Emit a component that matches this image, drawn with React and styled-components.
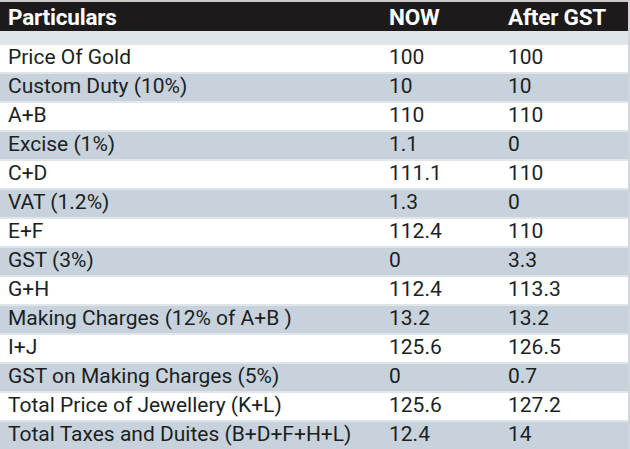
import React from "react";
import styled, { createGlobalStyle } from "styled-components";

const Global = createGlobalStyle`
  html, body { margin: 0; padding: 0; background: #ffffff; }
  body { font-family: Roboto, "Liberation Sans", sans-serif; }
`;

const Table = styled.div`
  width: 630px;
  height: 449px;
  overflow: hidden;
  box-sizing: border-box;
  border-top: 2px solid #c9c9c9;
  border-right: 2px solid #d2d6da;
  background: #e0e5ea;
  display: flex;
  flex-direction: column;
`;

const cols = `
  display: grid;
  grid-template-columns: 381px 119px 1fr;
  padding-left: 8px;
  box-sizing: border-box;
`;

const Header = styled.div`
  ${cols}
  height: 29px;
  background: #1c1a1b;
  color: #ffffff;
  font-weight: 700;
  font-size: 22.5px;
  line-height: 31px;
  letter-spacing: -0.2px;
  flex-shrink: 0;
`;

const Spacer = styled.div`
  height: 14px;
  flex-shrink: 0;
`;

const Row = styled.div`
  ${cols}
  height: 27px;
  flex-shrink: 0;
  margin-bottom: 2px;
  background: ${(p) => (p.$shade ? "#c8d2dc" : "#ffffff")};
  color: #1b1f23;
  font-size: 21px;
  line-height: 25px;
`;

const Cell = styled.div`
  white-space: nowrap;
`;

const rows = [
  ["Price Of Gold", "100", "100"],
  ["Custom Duty (10%)", "10", "10"],
  ["A+B", "110", "110"],
  ["Excise (1%)", "1.1", "0"],
  ["C+D", "111.1", "110"],
  ["VAT (1.2%)", "1.3", "0"],
  ["E+F", "112.4", "110"],
  ["GST (3%)", "0", "3.3"],
  ["G+H", "112.4", "113.3"],
  ["Making Charges (12% of A+B )", "13.2", "13.2"],
  ["I+J", "125.6", "126.5"],
  ["GST on Making Charges (5%)", "0", "0.7"],
  ["Total Price of Jewellery (K+L)", "125.6", "127.2"],
  ["Total Taxes and Duites (B+D+F+H+L)", "12.4", "14"],
];

export default function App() {
  return (
    <>
      <Global />
      <Table>
        <Header>
          <Cell>Particulars</Cell>
          <Cell>NOW</Cell>
          <Cell>After GST</Cell>
        </Header>
        <Spacer />
        {rows.map((r, i) => (
          <Row key={i} $shade={i % 2 === 1}>
            <Cell>{r[0]}</Cell>
            <Cell>{r[1]}</Cell>
            <Cell>{r[2]}</Cell>
          </Row>
        ))}
      </Table>
    </>
  );
}
